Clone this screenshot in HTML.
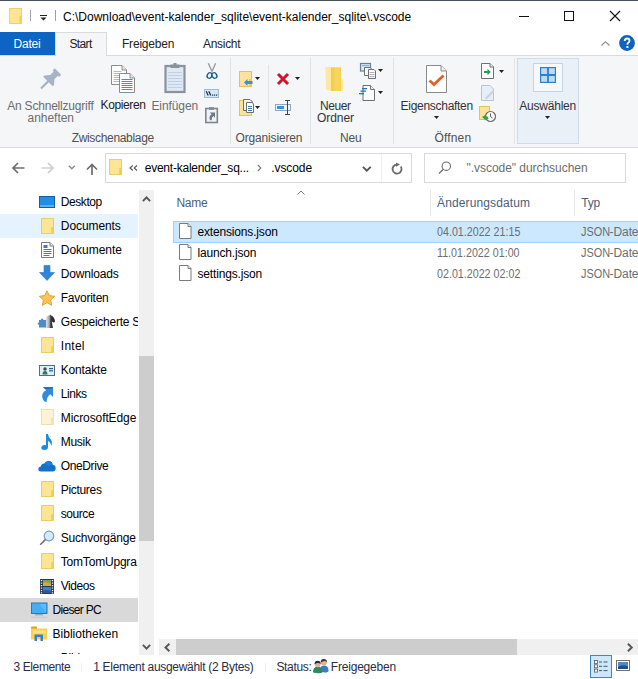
<!DOCTYPE html>
<html><head><meta charset="utf-8">
<style>
*{margin:0;padding:0;box-sizing:border-box}
html,body{width:638px;height:679px;overflow:hidden;background:#fff;font-family:"Liberation Sans",sans-serif;font-size:12px;color:#1a1a1a}
.a{position:absolute}
.t{position:absolute;white-space:nowrap;line-height:14px}
svg{position:absolute;overflow:visible}
#nav{position:absolute;left:0;top:186px;width:138px;height:468px;overflow:hidden}
#nav .a,#nav .t,#nav svg{margin-top:-186px}
</style></head><body>

<div class="a" style="left:0px;top:0px;width:638px;height:1px;background:#44505c;"></div>
<svg style="left:9px;top:8px" width="14" height="17" viewBox="0 0 14 17"><rect x="0.5" y="0.5" width="12" height="15" fill="#fde594" stroke="#ebd070"/><rect x="10.5" y="8" width="2.5" height="8" fill="#f2cf5a"/></svg>
<div class="a" style="left:30px;top:10px;width:1px;height:11px;background:#a0a0a0;"></div>
<svg style="left:40px;top:15px" width="7" height="6" viewBox="0 0 7 6"><rect x="0" y="0" width="7" height="1" fill="#222"/><path d="M0.5 2.5 L6.5 2.5 L3.5 5.5 Z" fill="#222"/></svg>
<div class="a" style="left:55px;top:10px;width:1px;height:11px;background:#a0a0a0;"></div>
<div class="t" style="left:63px;top:10.24px;color:#000;">C:\Download\event-kalender_sqlite\event-kalender_sqlite\.vscode</div>
<div class="a" style="left:519px;top:16px;width:10px;height:1px;background:#111;"></div>
<div class="a" style="left:564px;top:11px;width:10px;height:10px;background:transparent;border:1px solid #111"></div>
<svg style="left:610px;top:11px" width="10" height="10" viewBox="0 0 10 10"><path d="M0 0 L10 10 M10 0 L0 10" stroke="#111" stroke-width="1.1"/></svg>
<div class="a" style="left:0px;top:32px;width:55px;height:23px;background:#0c65c2;"></div>
<div class="t" style="left:13.6px;top:37.14px;color:#fff;letter-spacing:-0.237px;">Datei</div>
<div class="a" style="left:55px;top:32px;width:52px;height:24px;background:#f5f6f7;border:1px solid #dadbdc;border-bottom:none;z-index:2"></div>
<div class="t" style="left:69.4px;top:37.14px;color:#222;letter-spacing:-0.627px;z-index:3">Start</div>
<div class="t" style="left:122px;top:37.14px;color:#222;letter-spacing:-0.208px;">Freigeben</div>
<div class="t" style="left:203px;top:37.14px;color:#222;letter-spacing:-0.303px;">Ansicht</div>
<svg style="left:600.5px;top:40.5px" width="9" height="5" viewBox="0 0 9 5"><path d="M0.5 4.5 L4.5 0.7 L8.5 4.5" fill="none" stroke="#8a8a8a" stroke-width="1.1"/></svg>
<svg style="left:619px;top:35px" width="16" height="16" viewBox="0 0 16 16"><circle cx="8" cy="8" r="7.9" fill="#0e63bd"/><path d="M5.7 6.1 Q5.7 3.5 8.1 3.5 Q10.5 3.5 10.5 5.8 Q10.5 7.1 9.2 7.8 Q8.4 8.3 8.4 9.7" fill="none" stroke="#f4f8ff" stroke-width="1.8"/><rect x="7.4" y="11" width="2" height="2" fill="#f4f8ff"/></svg>
<div class="a" style="left:0;top:55px;width:638px;height:93px;background:#f5f6f7;border-top:1px solid #dadbdc;border-bottom:1px solid #dadbdc;z-index:1"></div>
<div class="a" style="left:56px;top:55px;width:50px;height:2px;background:#f5f6f7;z-index:2"></div>
<div style="position:absolute;left:0;top:0;width:638px;height:679px;z-index:4">
<div class="a" style="left:230px;top:58px;width:1px;height:86px;background:#e2e3e4;"></div>
<div class="a" style="left:310px;top:58px;width:1px;height:86px;background:#e2e3e4;"></div>
<div class="a" style="left:393px;top:58px;width:1px;height:86px;background:#e2e3e4;"></div>
<div class="a" style="left:514px;top:58px;width:1px;height:86px;background:#e2e3e4;"></div>
<div class="a" style="left:268px;top:65px;width:1px;height:55px;background:#e2e3e4;"></div>
<svg style="left:38px;top:66px" width="26" height="26" viewBox="0 0 26 26"><g transform="translate(10.4,15.1) rotate(45)" fill="#a9b3c6"><path d="M-4.6 -13.5 L4.6 -13.5 L4.6 -10.5 L3 -10.5 L3 -5.5 L6.8 -1.2 L6.8 0.6 L-6.8 0.6 L-6.8 -1.2 L-3 -5.5 L-3 -10.5 L-4.6 -10.5 Z"/><rect x="-1.1" y="0" width="2.2" height="10.5"/></g></svg>
<svg style="left:110px;top:64px" width="26" height="30" viewBox="0 0 26 30"><path d="M1.5 1.5 H12 L16.5 6 V20.5 H1.5 Z" fill="#fff" stroke="#8c8c8c"/><path d="M12 1.5 V6 H16.5" fill="#e8e8e8" stroke="#8c8c8c"/><rect x="3.5" y="7" width="8" height="1" fill="#9bbfe3"/><rect x="3.5" y="9" width="8" height="1" fill="#9bbfe3"/><rect x="3.5" y="11" width="8" height="1" fill="#9bbfe3"/><rect x="3.5" y="13" width="8" height="1" fill="#9bbfe3"/><rect x="3.5" y="15" width="8" height="1" fill="#9bbfe3"/><rect x="3.5" y="17" width="8" height="1" fill="#9bbfe3"/><path d="M9.5 9.5 H20 L24.5 14 V28.5 H9.5 Z" fill="#fff" stroke="#8c8c8c"/><path d="M20 9.5 V14 H24.5" fill="#e8e8e8" stroke="#8c8c8c"/><rect x="11.5" y="15" width="11" height="1" fill="#4a8ad4"/><rect x="11.5" y="17" width="11" height="1" fill="#4a8ad4"/><rect x="11.5" y="19" width="11" height="1" fill="#4a8ad4"/><rect x="11.5" y="21" width="11" height="1" fill="#4a8ad4"/><rect x="11.5" y="23" width="11" height="1" fill="#4a8ad4"/><rect x="11.5" y="25" width="11" height="1" fill="#4a8ad4"/></svg>
<svg style="left:164px;top:63px" width="22" height="30" viewBox="0 0 22 30"><rect x="1.5" y="3" width="19" height="26" fill="#dfe8f5" stroke="#8a929c" stroke-width="2.2"/><rect x="6.5" y="1.5" width="9" height="3.5" fill="#8a929c"/><rect x="9.5" y="0" width="3" height="2.5" fill="#8a929c"/><rect x="4" y="9" width="14" height="0.8" fill="#b9c8dc"/><rect x="4" y="12" width="14" height="0.8" fill="#b9c8dc"/><rect x="4" y="15" width="14" height="0.8" fill="#b9c8dc"/><rect x="4" y="18" width="14" height="0.8" fill="#b9c8dc"/><rect x="4" y="21" width="14" height="0.8" fill="#b9c8dc"/><rect x="4" y="24" width="14" height="0.8" fill="#b9c8dc"/></svg>
<svg style="left:204px;top:62px" width="16" height="18" viewBox="0 0 16 18"><path d="M4.3 1.3 L8 9.5 M11.6 1.3 L8 9.5" stroke="#9c9c9c" stroke-width="1.4" fill="none"/><ellipse cx="5.6" cy="13.5" rx="2.3" ry="2.9" transform="rotate(30 5.6 13.5)" fill="#e4f5fd" stroke="#1f5c85" stroke-width="1.4"/><ellipse cx="10.4" cy="13.5" rx="2.3" ry="2.9" transform="rotate(-30 10.4 13.5)" fill="#e4f5fd" stroke="#1f5c85" stroke-width="1.4"/></svg>
<svg style="left:204px;top:89px" width="16" height="10" viewBox="0 0 16 10"><rect x="0.5" y="0.5" width="14" height="8" fill="#d3e8f8" stroke="#a3b8cc"/><path d="M2.2 2.2 L4.2 6.6 M4.8 2.2 L6.8 6.6" stroke="#1c2c44" stroke-width="1.2"/><rect x="8" y="5.5" width="1.2" height="1.2" fill="#1c2c44"/><rect x="10" y="5.5" width="1.2" height="1.2" fill="#1c2c44"/><rect x="12" y="5.5" width="1.2" height="1.2" fill="#1c2c44"/></svg>
<svg style="left:204px;top:106px" width="16" height="18" viewBox="0 0 16 18"><rect x="1.8" y="2.5" width="11.5" height="14" fill="#eef3fa" stroke="#7f8690" stroke-width="1.6"/><rect x="5" y="1.2" width="5" height="2.6" fill="#7f8690"/><path d="M5.8 6.5 L11 6.5 L11 11.7 L9.4 10.1 Q7.4 11.6 7.6 14.2 L6 14.2 Q4.8 12.2 5.8 10.2 Q6.6 9 7.6 8.3 Z" fill="#6f7884"/></svg>
<div class="t" style="left:7.2px;top:98.64px;color:#6d6d6d;letter-spacing:-0.200px;">An Schnellzugriff</div>
<div class="t" style="left:27.6px;top:111.14px;color:#6d6d6d;letter-spacing:-0.048px;">anheften</div>
<div class="t" style="left:100.5px;top:98.44px;color:#222;letter-spacing:-0.366px;">Kopieren</div>
<div class="t" style="left:151.4px;top:98.64px;color:#6d6d6d;letter-spacing:-0.086px;">Einfügen</div>
<div class="t" style="left:71.7px;top:131.24px;color:#505050;letter-spacing:-0.327px;">Zwischenablage</div>
<svg style="left:238px;top:70px" width="24" height="18" viewBox="0 0 24 18"><rect x="1.5" y="1.5" width="12" height="15" fill="#fde39a" stroke="#e3c25e"/><rect x="11" y="9" width="3" height="7.5" fill="#f0c850"/><path d="M6 12.5 L9.5 9 L9.5 11 L14.5 11 L14.5 14 L9.5 14 L9.5 16 Z" fill="#3d8fd8"/></svg>
<svg style="left:255px;top:77.4px" width="6" height="4" viewBox="0 0 6 4"><path d="M0 0 L5 0 L2.5 3 Z" fill="#222"/></svg>
<svg style="left:275px;top:71px" width="16" height="16" viewBox="0 0 16 16"><path d="M3 3 L13 13 M13 3 L3 13" stroke="#d0142a" stroke-width="3"/></svg>
<svg style="left:295px;top:77.4px" width="6" height="4" viewBox="0 0 6 4"><path d="M0 0 L5 0 L2.5 3 Z" fill="#222"/></svg>
<svg style="left:238px;top:99px" width="24" height="18" viewBox="0 0 24 18"><rect x="1.5" y="1.5" width="12" height="15" fill="#fde39a" stroke="#e3c25e"/><path d="M5.5 0.5 H12 L14.5 3 V11.5 H5.5 Z" fill="#f4f4f4" stroke="#707070"/><path d="M8.5 3.5 H14 L15.5 5 V13.5 H8.5 Z" fill="#fff" stroke="#707070"/><rect x="10" y="7" width="4" height="1" fill="#3d7cc4"/><rect x="10" y="9" width="4" height="1" fill="#3d7cc4"/><rect x="10" y="11" width="4" height="1" fill="#3d7cc4"/></svg>
<svg style="left:255px;top:106px" width="6" height="4" viewBox="0 0 6 4"><path d="M0 0 L5 0 L2.5 3 Z" fill="#222"/></svg>
<svg style="left:274px;top:99px" width="18" height="17" viewBox="0 0 18 17"><rect x="1.5" y="5.5" width="15" height="6" fill="#eef4fb" stroke="#8fa6c0"/><rect x="3" y="7" width="7" height="3" fill="#3d8fd8"/><path d="M13.5 1.5 V15.5 M11 1.5 H16 M11 15.5 H16" stroke="#444" stroke-width="1"/></svg>
<div class="t" style="left:235.5px;top:131.24px;color:#505050;letter-spacing:-0.157px;">Organisieren</div>
<svg style="left:324px;top:65px" width="20" height="28" viewBox="0 0 20 28"><defs><linearGradient id="fg" x1="0" x2="1"><stop offset="0" stop-color="#f3c94a"/><stop offset="0.6" stop-color="#f9d75e"/><stop offset="1" stop-color="#f6d055"/></linearGradient></defs><path d="M1.5 2 H17 V26 H7 Z" fill="#fbe59a"/><path d="M7 2.5 H17 V26 H7 Z" fill="url(#fg)"/><path d="M1.5 2 L7 3.5 L7 26 L2 24.5 Z" fill="#fde7a2"/><rect x="17" y="14.5" width="2" height="11.5" fill="#fce6a0"/></svg>
<div class="t" style="left:320px;top:98.64px;color:#333;letter-spacing:-0.422px;">Neuer</div>
<div class="t" style="left:317px;top:111.14px;color:#333;letter-spacing:-0.070px;">Ordner</div>
<svg style="left:359px;top:62px" width="19" height="18" viewBox="0 0 19 18"><rect x="1.5" y="1.5" width="10" height="7.5" fill="#d3ebf5" stroke="#6a7f92" stroke-width="1.2"/><rect x="3" y="3" width="7" height="1.2" fill="#8fb0c8"/><path d="M5.5 5.5 H11 L12.5 7 V13.5 H5.5 Z" fill="#fbfbfb" stroke="#707070"/><path d="M9.5 7.5 H15 L16.5 9 V16.5 H9.5 Z" fill="#fff" stroke="#707070"/><rect x="10.5" y="10" width="5" height="0.9" fill="#b0a0c0"/><rect x="10.5" y="12" width="5" height="0.9" fill="#b0a0c0"/><rect x="10.5" y="14" width="5" height="0.9" fill="#b0a0c0"/></svg>
<svg style="left:378px;top:69.3px" width="6" height="4" viewBox="0 0 6 4"><path d="M0 0 L5 0 L2.5 3 Z" fill="#222"/></svg>
<svg style="left:358px;top:84px" width="19" height="18" viewBox="0 0 19 18"><path d="M5 1.5 H12.5 L16.5 5.5 V16.5 H5 Z" fill="#fff" stroke="#707070"/><path d="M12.5 1.5 V5.5 H16.5" fill="#eee" stroke="#707070"/><rect x="4" y="4" width="5" height="1.3" fill="#2f6fb8"/><rect x="2.5" y="6.5" width="5.5" height="1.3" fill="#2f6fb8"/><rect x="1" y="9" width="5" height="1.3" fill="#2f6fb8"/></svg>
<svg style="left:378px;top:91px" width="6" height="4" viewBox="0 0 6 4"><path d="M0 0 L5 0 L2.5 3 Z" fill="#222"/></svg>
<div class="t" style="left:340px;top:131.24px;color:#505050;letter-spacing:-0.170px;">Neu</div>
<svg style="left:425px;top:64px" width="23" height="30" viewBox="0 0 23 30"><path d="M1.5 1.5 H16 L21.5 7 V28.5 H1.5 Z" fill="#fff" stroke="#8a8a8a"/><path d="M16 1.5 V7 H21.5" fill="#eee" stroke="#8a8a8a"/><path d="M4.5 16.5 L9 20.5 L18.5 11.5" fill="none" stroke="#e0622a" stroke-width="2.8"/></svg>
<div class="t" style="left:400.6px;top:98.64px;color:#333;letter-spacing:-0.290px;">Eigenschaften</div>
<svg style="left:434px;top:116px" width="6" height="4" viewBox="0 0 6 4"><path d="M0 0 L5 0 L2.5 3 Z" fill="#222"/></svg>
<svg style="left:480px;top:62px" width="15" height="18" viewBox="0 0 15 18"><path d="M1.5 1.5 H10 L13.5 5 V16.5 H1.5 Z" fill="#fff" stroke="#707070"/><path d="M10 1.5 V5 H13.5" fill="#eee" stroke="#707070"/><path d="M4 9 H7.5 V6.8 L10.8 10 L7.5 13.2 V11 H4 Z" fill="#1fa24a"/></svg>
<svg style="left:499px;top:69.5px" width="6" height="4" viewBox="0 0 6 4"><path d="M0 0 L5 0 L2.5 3 Z" fill="#222"/></svg>
<svg style="left:480px;top:84px" width="16" height="18" viewBox="0 0 16 18"><path d="M1.5 1.5 H10 L13.5 5 V16.5 H1.5 Z" fill="#e6eef8" stroke="#b8c4d2"/><path d="M5 14 L13 6 L14.5 7.5 L6.5 15.5 Z" fill="#c9d3df"/></svg>
<svg style="left:478px;top:106px" width="19" height="17" viewBox="0 0 19 17"><rect x="1.5" y="0.5" width="10" height="13" fill="#fde39a" stroke="#e3c25e"/><circle cx="12.5" cy="10.5" r="5" fill="#fff" stroke="#6a6a6a" stroke-width="1.2"/><path d="M12.5 7.5 V10.5 L14.5 12" stroke="#444" fill="none" stroke-width="0.9"/><path d="M4 11 L8 8.5 L8 10 Q10 10 10.5 13 L8 13 L8 14.5 Z" fill="#2ca84a"/></svg>
<div class="t" style="left:434.4px;top:131.24px;color:#505050;letter-spacing:0.193px;">Öffnen</div>
<div class="a" style="left:517px;top:58px;width:62px;height:86px;background:#eaf0f7;border:1px solid #cddbea"></div>
<div class="a" style="left:533px;top:63px;width:30px;height:29px;background:#f6f9fc;border:1px solid #c3d3e5"></div>
<svg style="left:540px;top:67px" width="17" height="17" viewBox="0 0 17 17"><rect x="0.6" y="0.6" width="14.8" height="14.8" fill="#bcdcf6" stroke="#2f7fcf" stroke-width="1.2"/><path d="M8 0.5 V15.5 M0.5 8 H15.5" stroke="#2f7fcf" stroke-width="1.8"/></svg>
<div class="t" style="left:519.2px;top:98.64px;color:#333;letter-spacing:-0.204px;">Auswählen</div>
<svg style="left:545px;top:116px" width="6" height="4" viewBox="0 0 6 4"><path d="M0 0 L5 0 L2.5 3 Z" fill="#222"/></svg>
</div>
<svg style="left:12px;top:162px" width="13" height="12" viewBox="0 0 13 12"><path d="M12.5 6 H1.5 M6 1 L1 6 L6 11" fill="none" stroke="#6e6e6e" stroke-width="1.7"/></svg>
<svg style="left:41px;top:162px" width="13" height="12" viewBox="0 0 13 12"><path d="M0.5 6 H11.5 M7 1 L12 6 L7 11" fill="none" stroke="#cfcfcf" stroke-width="1.7"/></svg>
<svg style="left:68px;top:165px" width="8" height="5" viewBox="0 0 8 5"><path d="M0.8 0.8 L3.8 3.8 L6.8 0.8" fill="none" stroke="#8a8a8a" stroke-width="1.4"/></svg>
<svg style="left:86px;top:163px" width="12" height="12" viewBox="0 0 12 12"><path d="M6 12 V1.5 M1 6.5 L6 1.5 L11 6.5" fill="none" stroke="#6e6e6e" stroke-width="1.7"/></svg>
<div class="a" style="left:105px;top:153px;width:307px;height:30px;background:transparent;border:1px solid #d9d9d9"></div>
<div class="a" style="left:381px;top:154px;width:1px;height:28px;background:#ececec;"></div>
<svg style="left:109px;top:159px" width="14" height="17" viewBox="0 0 14 17"><rect x="0.5" y="0.5" width="12" height="15" fill="#fde594" stroke="#e9cd6c"/><rect x="10.2" y="9" width="2.8" height="7" fill="#f2cd56"/></svg>
<svg style="left:129px;top:165px" width="9" height="6" viewBox="0 0 9 6"><path d="M3.8 0.5 L1 3 L3.8 5.5 M8 0.5 L5.2 3 L8 5.5" fill="none" stroke="#555" stroke-width="1.1"/></svg>
<div class="t" style="left:144.7px;top:161.14px;color:#000;letter-spacing:-0.226px;">event-kalender_sq...</div>
<svg style="left:257px;top:164px" width="5" height="8" viewBox="0 0 5 8"><path d="M0.8 0.8 L3.8 4 L0.8 7.2" fill="none" stroke="#777" stroke-width="1.2"/></svg>
<div class="t" style="left:271.3px;top:161.14px;color:#000;letter-spacing:-0.097px;">.vscode</div>
<svg style="left:362px;top:166px" width="10" height="6" viewBox="0 0 10 6"><path d="M0.9 0.9 L4.8 4.7 L8.7 0.9" fill="none" stroke="#555" stroke-width="1.9"/></svg>
<svg style="left:391px;top:163px" width="12" height="12" viewBox="0 0 12 12"><path d="M9.8 3.6 A4.5 4.5 0 1 1 5.8 1.6" fill="none" stroke="#6a6a6a" stroke-width="1.8"/><path d="M5 -0.6 L9 1.6 L5 3.8 Z" fill="#6a6a6a"/></svg>
<div class="a" style="left:424px;top:153px;width:202px;height:30px;background:transparent;border:1px solid #d9d9d9"></div>
<svg style="left:438px;top:161px" width="14" height="14" viewBox="0 0 14 14"><circle cx="8.3" cy="5.2" r="4.2" fill="none" stroke="#6e6e6e" stroke-width="1.1"/><path d="M5.3 8.2 L1 12.5" stroke="#6e6e6e" stroke-width="1.3"/></svg>
<div class="t" style="left:466.5px;top:161.14px;color:#6d6d6d;letter-spacing:-0.042px;">".vscode" durchsuchen</div>
<div id="nav">
<div class="a" style="left:0px;top:214px;width:138px;height:24px;background:#e5f3ff;"></div>
<div class="a" style="left:0px;top:598px;width:138px;height:24px;background:#d9d9d9;"></div>
<div class="t" style="left:60.8px;top:195.14px;color:#000;letter-spacing:-0.425px;">Desktop</div>
<div class="t" style="left:60.8px;top:219.14px;color:#000;letter-spacing:-0.086px;">Documents</div>
<div class="t" style="left:60.8px;top:243.14px;color:#000;letter-spacing:-0.036px;">Dokumente</div>
<div class="t" style="left:60.8px;top:267.14px;color:#000;letter-spacing:-0.171px;">Downloads</div>
<div class="t" style="left:60.8px;top:291.14px;color:#000;letter-spacing:-0.256px;">Favoriten</div>
<div class="t" style="left:60.8px;top:315.14px;color:#000;letter-spacing:-0.250px;">Gespeicherte S</div>
<div class="t" style="left:60.8px;top:339.14px;color:#000;letter-spacing:0.246px;">Intel</div>
<div class="t" style="left:60.8px;top:363.14px;color:#000;letter-spacing:-0.185px;">Kontakte</div>
<div class="t" style="left:60.8px;top:387.14px;color:#000;letter-spacing:-0.478px;">Links</div>
<div class="t" style="left:60.8px;top:411.14px;color:#000;letter-spacing:-0.094px;">MicrosoftEdge</div>
<div class="t" style="left:60.8px;top:435.14px;color:#000;letter-spacing:-0.309px;">Musik</div>
<div class="t" style="left:60.8px;top:459.14px;color:#000;letter-spacing:-0.401px;">OneDrive</div>
<div class="t" style="left:60.8px;top:483.14px;color:#000;letter-spacing:-0.321px;">Pictures</div>
<div class="t" style="left:60.8px;top:507.14px;color:#000;letter-spacing:-0.449px;">source</div>
<div class="t" style="left:60.8px;top:531.14px;color:#000;letter-spacing:-0.211px;">Suchvorgänge</div>
<div class="t" style="left:60.8px;top:555.14px;color:#000;letter-spacing:-0.200px;">TomTomUpgra</div>
<div class="t" style="left:60.8px;top:579.14px;color:#000;letter-spacing:-0.475px;">Videos</div>
<div class="t" style="left:52.5px;top:603.14px;color:#000;letter-spacing:-0.689px;">Dieser PC</div>
<div class="t" style="left:52.5px;top:627.14px;color:#000;letter-spacing:0.027px;">Bibliotheken</div>
<div class="t" style="left:60.8px;top:651.14px;color:#000;letter-spacing:-0.250px;">Bilder</div>
<svg style="left:39px;top:196px" width="16" height="12" viewBox="0 0 16 12"><rect x="0.5" y="0.5" width="15" height="11" fill="#1e8fe6" stroke="#0f5fa8"/><rect x="1" y="9.5" width="14" height="1" fill="#9fd0f5"/></svg>
<svg style="left:41px;top:218px" width="14" height="17" viewBox="0 0 14 17"><rect x="0.5" y="0.5" width="12" height="15" fill="#fde594" stroke="#e9cd6c"/><rect x="10.2" y="9" width="2.8" height="7" fill="#f2cd56"/></svg>
<svg style="left:41px;top:242px" width="13" height="16" viewBox="0 0 13 16"><path d="M0.5 0.5 H9 L12.5 4 V15.5 H0.5 Z" fill="#fff" stroke="#7a7a7a"/><path d="M9 0.5 V4 H12.5" fill="#eee" stroke="#7a7a7a"/><rect x="2.5" y="3" width="4" height="3" fill="#3d7cc4"/><rect x="2.5" y="7" width="8" height="1" fill="#3d7cc4"/><rect x="2.5" y="9" width="8" height="1" fill="#3d7cc4"/><rect x="2.5" y="11" width="8" height="1" fill="#3d7cc4"/><rect x="2.5" y="13" width="6" height="1" fill="#3d7cc4"/></svg>
<svg style="left:39px;top:265px" width="17" height="17" viewBox="0 0 17 17"><path d="M5 0.5 H11 V7.5 H15.5 L8 15.5 L0.5 7.5 H5 Z" fill="#2f86d8" stroke="#2a78c4" stroke-width="0.6"/></svg>
<svg style="left:38px;top:290px" width="18" height="17" viewBox="0 0 18 17"><path d="M9 0.8 L11.3 5.6 L16.6 6.3 L12.7 10 L13.7 15.3 L9 12.7 L4.3 15.3 L5.3 10 L1.4 6.3 L6.7 5.6 Z" fill="#fbc654" stroke="#e39a2c" stroke-width="0.9"/></svg>
<svg style="left:36px;top:311px" width="22" height="20" viewBox="0 0 22 20"><defs><linearGradient id="kg" x1="0" x2="1"><stop offset="0" stop-color="#eef0f2"/><stop offset="0.4" stop-color="#a0a6ac"/><stop offset="0.55" stop-color="#3a3a3a"/><stop offset="1" stop-color="#262626"/></linearGradient></defs><path d="M9.5 17 L9.5 9.5 Q9.5 4.8 13.5 4.2 L14.5 3.5 L15.2 4.6 Q18.2 5.8 19 10 Q19 11.8 17.4 11.6 L16 10.6 L16.3 13.8 L17 17 Z" fill="url(#kg)"/><path d="M3 9 H4.8 Q4.8 7.4 6.1 7.4 Q7.4 7.4 7.4 9 H10 V16.5 H3 V13.8 Q1.6 13.8 1.6 12.6 Q1.6 11.4 3 11.4 Z" fill="#4d8bcb"/></svg>
<svg style="left:41px;top:337px" width="14" height="17" viewBox="0 0 14 17"><rect x="0.5" y="0.5" width="12" height="15" fill="#fde594" stroke="#e9cd6c"/><rect x="10.2" y="9" width="2.8" height="7" fill="#f2cd56"/></svg>
<svg style="left:39px;top:365px" width="16" height="11" viewBox="0 0 16 11"><rect x="0.5" y="0.5" width="15" height="10" fill="#d9f0f8" stroke="#4f6d88"/><circle cx="6" cy="4" r="1.7" fill="#3f4a4a"/><path d="M3.5 9.5 Q3.5 6 6 6 Q8.5 6 8.5 9.5 Z" fill="#3a6f66"/><rect x="10" y="3" width="4" height="1.2" fill="#2f5f90"/><rect x="10" y="5.2" width="4" height="1.2" fill="#2f5f90"/></svg>
<svg style="left:40px;top:385px" width="14" height="18" viewBox="0 0 14 18"><path d="M3 2 L13 2 L13 12 L10.2 9.2 Q6.5 12 6.8 16.8 L4.8 16.8 Q1.2 13 2.5 9 Q3.5 6.5 6.2 5.2 Z" fill="#2f8ae0"/><path d="M3 2 L13 2 L11 4 L5 4 Z" fill="#1f5f9f" opacity="0.6"/></svg>
<svg style="left:41px;top:409px" width="14" height="17" viewBox="0 0 14 17"><rect x="0.5" y="0.5" width="12" height="15" fill="#fdf3d4" stroke="#efdfa8"/><rect x="10" y="9" width="3" height="7" fill="#f5e3a8"/></svg>
<svg style="left:40px;top:433px" width="14" height="18" viewBox="0 0 14 18"><path d="M6 1 H8 Q8.3 4 10.5 6 Q12.5 8 11.6 12.5 L11 12.5 Q11 9.5 8 8 V14 Q8 17 4.5 17 Q1.3 17 1.3 14.8 Q1.3 12.2 4.6 12 Q5.5 12 6 12.3 Z" fill="#1f88e2"/></svg>
<svg style="left:38px;top:460px" width="18" height="12" viewBox="0 0 18 12"><path d="M2.8 11.5 Q0.3 11.5 0.3 9 Q0.3 6.8 2.8 6.6 Q3.3 3.6 6.4 3.6 Q7.6 1 10.6 1 Q14.2 1 14.6 4.8 Q17.7 5 17.7 8.2 Q17.7 11.5 14.4 11.5 Z" fill="#1570c8"/><path d="M6.4 3.6 Q7.6 1 10.6 1 Q14.2 1 14.6 4.8 Q12 4.5 10.5 6.5 Q8.8 4 6.4 3.6 Z" fill="#1a7fd6"/></svg>
<svg style="left:41px;top:481px" width="14" height="17" viewBox="0 0 14 17"><rect x="0.5" y="0.5" width="12" height="15" fill="#fde594" stroke="#e9cd6c"/><rect x="10.2" y="9" width="2.8" height="7" fill="#f2cd56"/></svg>
<svg style="left:41px;top:505px" width="14" height="17" viewBox="0 0 14 17"><rect x="0.5" y="0.5" width="12" height="15" fill="#fde594" stroke="#e9cd6c"/><rect x="10.2" y="9" width="2.8" height="7" fill="#f2cd56"/></svg>
<svg style="left:39px;top:530px" width="16" height="16" viewBox="0 0 16 16"><circle cx="10" cy="6" r="4.8" fill="#d6eaf8" stroke="#7a9cc0" stroke-width="1.2"/><path d="M6.6 9.4 L1.2 14.8" stroke="#6e6e6e" stroke-width="1.5"/></svg>
<svg style="left:41px;top:553px" width="14" height="17" viewBox="0 0 14 17"><rect x="0.5" y="0.5" width="12" height="15" fill="#fde594" stroke="#e9cd6c"/><rect x="10.2" y="9" width="2.8" height="7" fill="#f2cd56"/></svg>
<svg style="left:40px;top:579px" width="14" height="15" viewBox="0 0 14 15"><rect x="0" y="0" width="14" height="15" fill="#2b3550"/><rect x="3" y="1" width="8" height="6" fill="#8a9a6a"/><path d="M3 4 Q6 2 11 5 V7 H3 Z" fill="#c8b040"/><rect x="3" y="8" width="8" height="6" fill="#3f7fd0"/><path d="M3 12 Q7 10 11 12 V14 H3 Z" fill="#2a5a9a"/><rect x="0.8" y="1" width="1.4" height="1.2" fill="#f4f4f4"/><rect x="11.8" y="1" width="1.4" height="1.2" fill="#f4f4f4"/><rect x="0.8" y="3.5" width="1.4" height="1.2" fill="#f4f4f4"/><rect x="11.8" y="3.5" width="1.4" height="1.2" fill="#f4f4f4"/><rect x="0.8" y="6" width="1.4" height="1.2" fill="#f4f4f4"/><rect x="11.8" y="6" width="1.4" height="1.2" fill="#f4f4f4"/><rect x="0.8" y="8.5" width="1.4" height="1.2" fill="#f4f4f4"/><rect x="11.8" y="8.5" width="1.4" height="1.2" fill="#f4f4f4"/><rect x="0.8" y="11" width="1.4" height="1.2" fill="#f4f4f4"/><rect x="11.8" y="11" width="1.4" height="1.2" fill="#f4f4f4"/><rect x="0.8" y="13.3" width="1.4" height="1.2" fill="#f4f4f4"/><rect x="11.8" y="13.3" width="1.4" height="1.2" fill="#f4f4f4"/></svg>
<svg style="left:30px;top:602px" width="18" height="17" viewBox="0 0 18 17"><rect x="1.5" y="1" width="15.5" height="10.5" fill="#45aef2" stroke="#2a78b8"/><path d="M9 2 L16 2 L16 10 Z" fill="#6cc4fa" opacity="0.6"/><rect x="5" y="12.3" width="8" height="1" fill="#7f9bb5"/><rect x="1" y="14.8" width="16.5" height="1.2" fill="#b9cde0"/></svg>
<svg style="left:30px;top:626px" width="18" height="17" viewBox="0 0 18 17"><rect x="1" y="0.5" width="6" height="3" rx="1" fill="#d9a21e"/><rect x="1" y="2.5" width="16" height="11" fill="#fbd04e"/><rect x="3" y="4.5" width="13" height="3" fill="#fde08a"/><path d="M4.5 15 V8.5 H13 V15 H10.5 V11 H7 V15 Z" fill="#3a80c6"/></svg>
</div>
<div class="a" style="left:139px;top:190px;width:15px;height:465px;background:#f0f0f0;"></div>
<div class="a" style="left:139px;top:356px;width:15px;height:185px;background:#cdcdcd;"></div>
<svg style="left:142px;top:196px" width="9" height="7" viewBox="0 0 9 7"><path d="M0.9 5.2 L4.5 1.4 L8.1 5.2" fill="none" stroke="#555" stroke-width="1.9"/></svg>
<svg style="left:142px;top:644px" width="9" height="7" viewBox="0 0 9 7"><path d="M0.9 0.9 L4.5 4.7 L8.1 0.9" fill="none" stroke="#555" stroke-width="1.9"/></svg>
<svg style="left:297px;top:190px" width="8" height="5" viewBox="0 0 8 5"><path d="M0.5 4.5 L4 1 L7.5 4.5" fill="none" stroke="#777" stroke-width="1"/></svg>
<div class="t" style="left:176.4px;top:196.24px;color:#4c607a;letter-spacing:-0.245px;">Name</div>
<div class="t" style="left:437px;top:196.24px;color:#4c607a;letter-spacing:0.123px;">Änderungsdatum</div>
<div class="t" style="left:581.3px;top:196.24px;color:#4c607a;letter-spacing:-0.200px;">Typ</div>
<div class="a" style="left:430px;top:190px;width:1px;height:26px;background:#e5e5e5;"></div>
<div class="a" style="left:574px;top:190px;width:1px;height:26px;background:#e5e5e5;"></div>
<div class="a" style="left:173px;top:221px;width:470px;height:22px;background:#cce8ff;border:1px solid #99d1ff"></div>
<svg style="left:179px;top:223px" width="13" height="16" viewBox="0 0 13 16"><path d="M0.5 0.5 H9 L12 3.5 V15.5 H0.5 Z" fill="#fff" stroke="#7a7a7a"/><path d="M9 0.5 V3.5 H12" fill="#f0f0f0" stroke="#7a7a7a"/></svg>
<div class="t" style="left:197.5px;top:224.64px;color:#000;letter-spacing:-0.167px;">extensions.json</div>
<div class="t" style="left:437px;top:224.64px;color:#6d6d6d;transform:scaleX(0.892);transform-origin:0 0">04.01.2022 21:15</div>
<div class="t" style="left:581.3px;top:224.64px;color:#6d6d6d;transform:scaleX(0.91);transform-origin:0 0">JSON</div>
<div class="t" style="left:609.6px;top:224.64px;color:#6d6d6d;letter-spacing:-0.100px;">-Datei</div>
<svg style="left:179px;top:244px" width="13" height="16" viewBox="0 0 13 16"><path d="M0.5 0.5 H9 L12 3.5 V15.5 H0.5 Z" fill="#fff" stroke="#7a7a7a"/><path d="M9 0.5 V3.5 H12" fill="#f0f0f0" stroke="#7a7a7a"/></svg>
<div class="t" style="left:197.5px;top:245.64px;color:#000;letter-spacing:-0.167px;">launch.json</div>
<div class="t" style="left:437px;top:245.64px;color:#6d6d6d;transform:scaleX(0.892);transform-origin:0 0">11.01.2022 01:00</div>
<div class="t" style="left:581.3px;top:245.64px;color:#6d6d6d;transform:scaleX(0.91);transform-origin:0 0">JSON</div>
<div class="t" style="left:609.6px;top:245.64px;color:#6d6d6d;letter-spacing:-0.100px;">-Datei</div>
<svg style="left:179px;top:265px" width="13" height="16" viewBox="0 0 13 16"><path d="M0.5 0.5 H9 L12 3.5 V15.5 H0.5 Z" fill="#fff" stroke="#7a7a7a"/><path d="M9 0.5 V3.5 H12" fill="#f0f0f0" stroke="#7a7a7a"/></svg>
<div class="t" style="left:197.5px;top:266.64px;color:#000;letter-spacing:-0.167px;">settings.json</div>
<div class="t" style="left:437px;top:266.64px;color:#6d6d6d;transform:scaleX(0.892);transform-origin:0 0">02.01.2022 02:02</div>
<div class="t" style="left:581.3px;top:266.64px;color:#6d6d6d;transform:scaleX(0.91);transform-origin:0 0">JSON</div>
<div class="t" style="left:609.6px;top:266.64px;color:#6d6d6d;letter-spacing:-0.100px;">-Datei</div>
<div class="a" style="left:159px;top:639px;width:479px;height:16px;background:#f0f0f0;"></div>
<div class="a" style="left:176px;top:639px;width:341px;height:16px;background:#cdcdcd;"></div>
<svg style="left:164px;top:643px" width="7" height="9" viewBox="0 0 7 9"><path d="M5.4 0.8 L1.5 4.5 L5.4 8.2" fill="none" stroke="#555" stroke-width="1.9"/></svg>
<svg style="left:627px;top:643px" width="7" height="9" viewBox="0 0 7 9"><path d="M0.9 0.8 L4.8 4.5 L0.9 8.2" fill="none" stroke="#555" stroke-width="1.9"/></svg>
<div class="t" style="left:13.6px;top:659.64px;color:#2b2d45;letter-spacing:-0.414px;">3 Elemente</div>
<div class="a" style="left:81px;top:663px;width:1px;height:9px;background:#eeeeee;"></div>
<div class="t" style="left:93.2px;top:659.64px;color:#2b2d45;letter-spacing:-0.304px;">1 Element ausgewählt (2 Bytes)</div>
<div class="a" style="left:265px;top:663px;width:1px;height:9px;background:#eeeeee;"></div>
<div class="t" style="left:276.4px;top:659.64px;color:#2b2d45;letter-spacing:-0.320px;">Status:</div>
<svg style="left:312px;top:658px" width="18" height="16" viewBox="0 0 18 16"><path d="M7.5 13.5 Q7.5 7.5 11.8 7.5 Q16.5 7.5 16.5 12.5 Q16.5 14.5 13 14.5 Z" fill="#3b7cc6"/><circle cx="11.8" cy="4.3" r="3.1" fill="#d9b39a"/><path d="M8.7 4.3 Q8.7 1 11.8 1 Q14.9 1 14.9 4.3 Q13.5 2.6 11 3.3 Q10 4.5 8.7 4.3 Z" fill="#4a3024"/><path d="M1 14.5 Q0.8 8.8 5.6 8.8 Q10.4 8.8 10.4 14.5 Q8 15.8 1 14.5 Z" fill="#2e8a5e"/><circle cx="5.6" cy="6.2" r="3" fill="#d6b5a0"/><path d="M2.6 6 Q2.6 2.8 5.6 2.8 Q8.6 2.8 8.6 6 Q7 4.6 5 5 Q3.8 5.8 2.6 6 Z" fill="#2a2a2a"/></svg>
<div class="t" style="left:330.8px;top:659.64px;color:#2b2d45;letter-spacing:-0.201px;">Freigegeben</div>
<div class="a" style="left:590px;top:655px;width:22px;height:23px;background:#cce8ff;border:1px solid #3f86c4"></div>
<svg style="left:594px;top:660px" width="15" height="13" viewBox="0 0 15 13"><rect x="0.5" y="0.5" width="3" height="3" fill="#fff" stroke="#555" stroke-width="0.8"/><rect x="0.5" y="4.8" width="3" height="3" fill="#fff" stroke="#555" stroke-width="0.8"/><rect x="0.5" y="9.1" width="3" height="3" fill="#fff" stroke="#555" stroke-width="0.8"/><rect x="5" y="1.5" width="3" height="1" fill="#555"/><rect x="9.5" y="1.5" width="4" height="1" fill="#555"/><rect x="5" y="5.8" width="3" height="1" fill="#555"/><rect x="9.5" y="5.8" width="4" height="1" fill="#555"/><rect x="5" y="10.1" width="3" height="1" fill="#555"/><rect x="9.5" y="10.1" width="4" height="1" fill="#555"/></svg>
<svg style="left:616px;top:660px" width="14" height="11" viewBox="0 0 14 11"><rect x="0.5" y="0.5" width="13" height="10" fill="#fff" stroke="#707070"/><rect x="2" y="2" width="10" height="7" fill="#4a8ad0"/><path d="M2 7 Q6 4 12 6.5 V9 H2 Z" fill="#1f4f8a"/></svg>
</body></html>
